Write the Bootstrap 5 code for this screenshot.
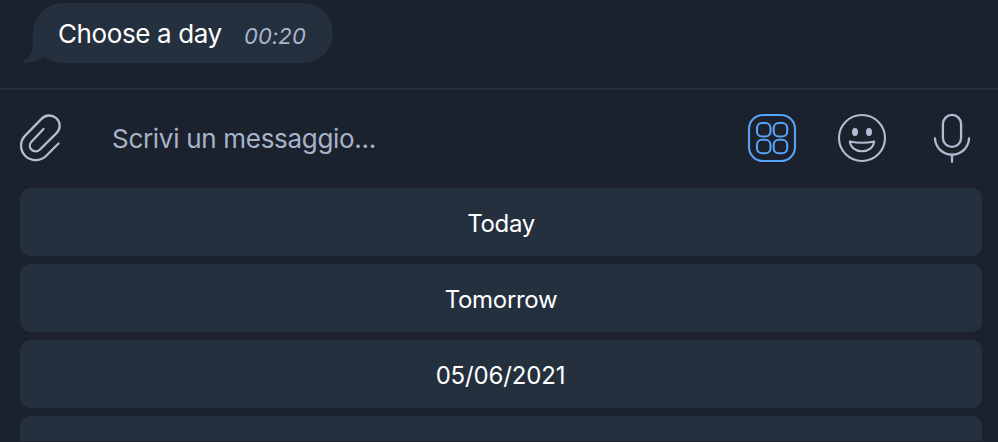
<!DOCTYPE html>
<html lang="it">
<head>
<meta charset="utf-8">
<meta name="viewport" content="width=device-width, initial-scale=1">
<title>Chat</title>
<link href="https://cdn.jsdelivr.net/npm/bootstrap@5.3.0/dist/css/bootstrap.min.css" rel="stylesheet">
<style>
  body { background: #1b222d; color: #fff; font-family: Inter, "Liberation Sans", sans-serif; height: 442px; line-height: 1; }
  .chat-log { height: 88px; padding: 3px 0 0 33px; }
  .bubble { width: 300px; height: 60px; border-radius: 30px; background: #25303f; padding-left: 25px; white-space: nowrap; }
  .bubble-tail { left: -12px; top: 0; }
  .bubble-text { font-size: 26px; width: 186px; letter-spacing: -0.38px; padding-top: 1px; }
  .bubble-time { font-size: 22px; color: #a9b7cd; font-style: italic; padding-top: 6px; letter-spacing: 0.1px; }
  .composer { height: 100px; border-top: 2px solid #25303f; padding: 0 26px 2px 18px; color: #b0bdd2; }
  .entry { font-size: 26px; margin-left: 50px; padding-top: 1px; color: #a6b3c8; letter-spacing: -0.3px; }
  .tool-icons { gap: 40px; }
  .mic { margin-left: 5px; }
  .keyboard { padding: 0 16px 0 20px; gap: 8px; }
  .key { height: 68px; border: 0; border-radius: 10px; background: #25303f; color: #fff; font-size: 24px; line-height: 1; padding: 4px 0 0; letter-spacing: -0.32px; }
  .key-date { letter-spacing: -0.15px; padding-right: 1px; }
  .key:hover { background: #2b394a; color: #fff; }
  .key-cut { height: 25px; border-radius: 10px 10px 0 0; }
</style>
<script src="https://cdn.jsdelivr.net/npm/bootstrap@5.3.0/dist/js/bootstrap.bundle.min.js"></script>
</head>
<body class="overflow-hidden d-flex flex-column">
  <main class="chat-log flex-shrink-0">
    <div class="bubble position-relative d-flex align-items-center">
      <svg class="bubble-tail position-absolute" width="50" height="60" viewBox="0 0 50 60" fill="#25303f"><path d="M12 29V43C12 50 7 56 0 59.500C9 60.500 18 58 25 53L42 30Z"/></svg>
      <span class="bubble-text position-relative">Choose a day</span>
      <span class="bubble-time">00:20</span>
    </div>
  </main>
  <section class="composer d-flex align-items-center flex-shrink-0">
    <svg width="44" height="50" viewBox="18 113 44 50" fill="none" stroke="currentColor" stroke-width="2.300" stroke-linecap="round"><path d="M58.500 143.500L46 156C40.200 161.500 31.200 161.500 25.400 156C19.600 150.200 19.600 141.200 25.400 135.400L41.200 119.100C45.500 114.500 51.800 114.400 56.200 118.200C60.700 122.200 60.900 128.500 56.500 133.100L40 149.500C37.400 152 33.700 152 31.400 149.600C29.200 147.300 29.300 144 31.500 141.700L43.500 129"/></svg>
    <div class="entry flex-grow-1">Scrivi un messaggio...</div>
    <div class="tool-icons d-flex align-items-center">
      <svg width="50" height="50" viewBox="747 113 50 50" fill="none" stroke="#58a3f6" stroke-width="2.100"><rect x="749" y="115" width="46" height="46" rx="14"/><rect x="757" y="123" width="13.500" height="13.500" rx="5"/><rect x="773.700" y="123" width="13.500" height="13.500" rx="5"/><rect x="757" y="139.700" width="13.500" height="13.500" rx="5"/><rect x="773.700" y="139.700" width="13.500" height="13.500" rx="5"/></svg>
      <svg width="50" height="50" viewBox="837 113 50 50" fill="none" stroke="currentColor" stroke-width="2.100"><circle cx="862" cy="138" r="23"/><g fill="currentColor" stroke="none"><ellipse cx="855" cy="132" rx="3" ry="4"/><ellipse cx="869" cy="132" rx="3" ry="4"/></g><path stroke-linejoin="round" d="M849.800 141.500Q862 144 874.200 141.500C873.500 147.500 868.500 151.300 862 151.300S850.500 147.500 849.800 141.500Z"/></svg>
      <svg class="mic" width="40" height="50" viewBox="932 113 40 50" fill="none" stroke="currentColor" stroke-width="2.300" stroke-linecap="round"><rect x="942.900" y="114.900" width="18.200" height="32" rx="9.100"/><path d="M935 138.500C935.500 148 943 154.600 952 154.600S968.500 148 969 138.500M952 155V161.700"/></svg>
    </div>
  </section>
  <nav class="keyboard d-flex flex-column flex-shrink-0">
    <button type="button" class="key btn w-100">Today</button>
    <button type="button" class="key btn w-100">Tomorrow</button>
    <button type="button" class="key key-date btn w-100">05/06/2021</button>
    <button type="button" class="key key-cut btn w-100" aria-label="Altro"></button>
  </nav>
</body>
</html>
